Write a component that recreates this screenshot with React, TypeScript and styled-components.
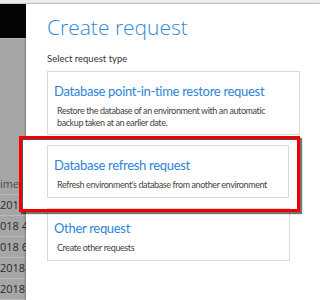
import React, { ReactElement } from 'react'
import styled, { createGlobalStyle } from 'styled-components'

const GlobalStyle = createGlobalStyle`
  html, body {
    margin: 0;
    padding: 0;
    width: 320px;
    height: 300px;
    overflow: hidden;
    font-family: Lato, 'Open Sans', 'Liberation Sans', sans-serif;
  }
`

const Styled = {
  Page: styled.div`
    position: relative;
    display: flex;
    flex-direction: column;
    width: 320px;
    height: 300px;
    overflow: hidden;
    background-color: #fff;
  `,
  TopStrip: styled.div`
    height: 3px;
    background-color: #ececec;
    border-bottom: 1px solid #cfcfcf;
  `,
  Body: styled.div`
    flex: 1;
    display: flex;
    min-height: 0;
  `,
  Backdrop: styled.div`
    width: 26px;
    display: flex;
    flex-direction: column;
    overflow: hidden;
  `,
  AppBar: styled.div`
    height: 34px;
    background-color: #050505;
  `,
  Grid: styled.div`
    flex: 1;
    background-color: #a6a6a6;
    border-top: 1px solid #b4b4b4;
    padding-top: 135px;
  `,
  GridRow: styled.div<{ $header?: boolean }>`
    height: 20px;
    line-height: 20px;
    border-bottom: 1px solid #b9b9b9;
    font-family: 'Open Sans', sans-serif;
    font-size: 11px;
    color: ${(p) => (p.$header ? '#4a4a4a' : '#2a2a2a')};
    white-space: nowrap;
  `,
  Panel: styled.div`
    flex: 1;
    background-color: #fff;
    box-shadow: -1px 0 2px rgba(0, 0, 0, 0.25);
    padding: 9px 0 0 21px;
    display: flex;
    flex-direction: column;
  `,
  Title: styled.h1`
    margin: 0;
    font-family: 'Open Sans', sans-serif;
    font-size: 21px;
    font-weight: 300;
    line-height: 28px;
    color: #2f88d9;
  `,
  Label: styled.div`
    margin-top: 11px;
    font-size: 9.5px;
    line-height: 14px;
    color: #333;
  `,
  Cards: styled.div`
    margin-top: 5px;
    display: flex;
    flex-direction: column;
    gap: 10px;
  `,
  Card: styled.div<{ $width: number; $height: number }>`
    width: ${(p) => p.$width}px;
    height: ${(p) => p.$height}px;
    box-sizing: border-box;
    border: 1px solid #d9d9d9;
    padding: 10px 6px 0 6px;
  `,
  CardTitle: styled.div`
    font-size: 13px;
    letter-spacing: -0.3px;
    line-height: 18px;
    color: #2d84d6;
    white-space: nowrap;
  `,
  CardText: styled.div`
    margin-top: 5px;
    padding-left: 3px;
    font-size: 9px;
    letter-spacing: -0.4px;
    line-height: 12px;
    color: #444;
  `,
  Highlight: styled.div`
    position: absolute;
    left: 19px;
    top: 136px;
    width: 281px;
    height: 76px;
    box-sizing: border-box;
    border: 3px solid #f00000;
    background: linear-gradient(to right, #fff 7px, transparent 7px);
    box-shadow: inset 1px 1px 0 #555, 2px 2px 1px rgba(0, 0, 0, 0.55);
    pointer-events: none;
  `,
}

const rows = ['ime st', '2018 8', '018 4:', '018 6:', '2018 5', '2018 2']

const requests = [
  {
    title: 'Database point-in-time restore request',
    text: 'Restore the database of an environment with an automatic backup taken at an earlier date.',
    width: 253,
    height: 64,
  },
  {
    title: 'Database refresh request',
    text: "Refresh environment's database from another environment",
    width: 242,
    height: 53,
  },
  {
    title: 'Other request',
    text: 'Create other requests',
    width: 243,
    height: 53,
  },
]

function App(): ReactElement {
  return (
    <Styled.Page>
      <GlobalStyle />
      <Styled.TopStrip />
      <Styled.Body>
        <Styled.Backdrop>
          <Styled.AppBar />
          <Styled.Grid>
            {rows.map((r, i) => (
              <Styled.GridRow key={r} $header={i === 0}>
                {r}
              </Styled.GridRow>
            ))}
          </Styled.Grid>
        </Styled.Backdrop>
        <Styled.Panel>
          <Styled.Title>Create request</Styled.Title>
          <Styled.Label>Select request type</Styled.Label>
          <Styled.Cards>
            {requests.map((r) => (
              <Styled.Card key={r.title} $width={r.width} $height={r.height}>
                <Styled.CardTitle>{r.title}</Styled.CardTitle>
                <Styled.CardText>{r.text}</Styled.CardText>
              </Styled.Card>
            ))}
          </Styled.Cards>
        </Styled.Panel>
      </Styled.Body>
      <Styled.Highlight />
    </Styled.Page>
  )
}

export default App
